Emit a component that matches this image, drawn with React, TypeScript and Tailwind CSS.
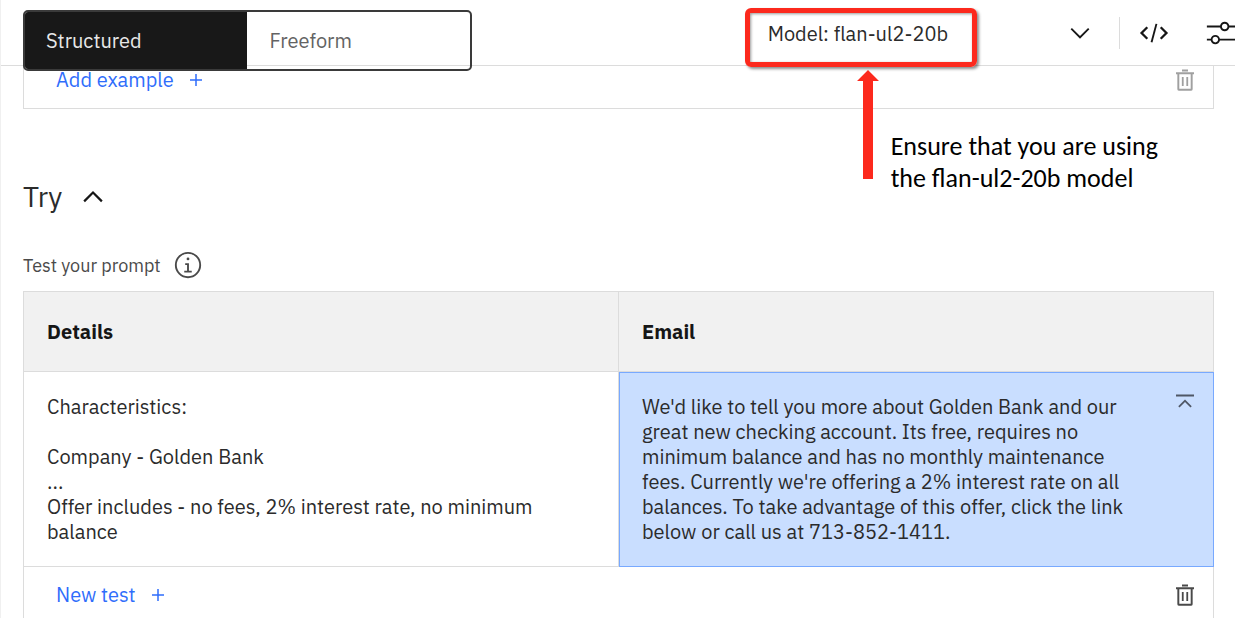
import type { ReactNode } from "react";

type IconProps = { className?: string };

function Icon({ className, children }: { className?: string; children: ReactNode }) {
  return (
    <svg viewBox="0 0 32 32" fill="currentColor" aria-hidden="true" className={className}>
      {children}
    </svg>
  );
}

const ChevronDown = ({ className }: IconProps) => (
  <Icon className={className}>
    <path d="M16 22L6 12 7.4 10.6 16 19.2 24.6 10.6 26 12z" />
  </Icon>
);

const ChevronUp = ({ className }: IconProps) => (
  <Icon className={className}>
    <path d="M16 9.500L26.300 19.800 24.600 21.500 16 12.900 7.400 21.500 5.700 19.800z" />
  </Icon>
);

const Code = ({ className }: IconProps) => (
  <Icon className={className}>
    <path d="M31 16L24 23 22.3 21.3 27.6 16 22.3 10.700 24 9z" />
    <path d="M1 16L8 9 9.700 10.700 4.400 16 9.700 21.300 8 23z" />
    <path d="M5.91 15H26.08V17H5.91z" transform="rotate(-75 16 16)" />
  </Icon>
);

const Adjust = ({ className }: IconProps) => (
  <Icon className={className}>
    <path d="M32 8h-6.1c-.5-2.3-2.5-4-4.9-4s-4.4 1.7-4.9 4H2v2h14.1c.5 2.3 2.5 4 4.9 4s4.4-1.7 4.9-4H32V8zm-11 4c-1.7 0-3-1.3-3-3s1.3-3 3-3 3 1.3 3 3-1.3 3-3 3zM2 24h4.1c.5 2.3 2.5 4 4.9 4s4.4-1.7 4.9-4H32v-2H15.9c-.5-2.3-2.5-4-4.9-4s-4.4 1.7-4.9 4H2v2zm9-4c1.7 0 3 1.3 3 3s-1.3 3-3 3-3-1.3-3-3 1.3-3 3-3z" />
  </Icon>
);

const TrashCan = ({ className }: IconProps) => (
  <Icon className={className}>
    <path d="M11.800 12H14.200V24H11.800zM17.800 12H20.200V24H17.800zM4 5.600V8.200H5.800V28a2 2 0 0 0 2 2.200H24.200a2 2 0 0 0 2-2.200V8.200h1.800V5.600zM8.400 27.600V8.200H23.600V27.600zM12 2H20V4.600H12z" />
  </Icon>
);

const Information = ({ className }: IconProps) => (
  <Icon className={className}>
    <path d="M17 22V14H13V16H15V22H12V24H20V22zM16 8a1.5 1.5 0 1 0 1.5 1.5A1.5 1.5 0 0 0 16 8Z" />
    <path d="M16 30A14 14 0 1 1 30 16 14 14 0 0 1 16 30ZM16 4A12 12 0 1 0 28 16 12 12 0 0 0 16 4Z" />
  </Icon>
);

const Plus = ({ className }: IconProps) => (
  <Icon className={className}>
    <path d="M17 15V8H15V15H8V17H15V24H17V17H24V15z" />
  </Icon>
);

const Collapse = ({ className }: IconProps) => (
  <Icon className={className}>
    <path d="M4 6H28V8.500H4zM16 12.500L7 21.600 8.700 23.300 16 16 23.300 23.300 25 21.600z" />
  </Icon>
);

function ActionBar({ label, muted }: { label: string; muted?: boolean }) {
  return (
    <div className="flex items-center justify-between pr-4 pl-8">
      <button type="button" className="flex items-center gap-2.5 text-[#2f6dfb]">
        {label}
        <Plus className="size-6" />
      </button>
      <button
        type="button"
        aria-label="Delete"
        className={muted ? "text-[#a0a0a0]" : "text-[#4a4a4a]"}
      >
        <TrashCan className="size-6" />
      </button>
    </div>
  );
}

function ModelPicker() {
  return (
    <div className="relative rounded-md border-5 border-[#fc291d] pt-2 pr-6 pb-4 pl-[18px] shadow-[2px_2px_3px_rgba(0,0,0,0.45),inset_1px_1px_3px_rgba(0,0,0,0.4)]">
      <span className="block leading-[25px] whitespace-nowrap">Model: flan-ul2-20b</span>
      <div className="absolute top-[57px] left-[107px] flex items-start gap-3">
        <svg viewBox="0 0 22 110" className="h-[110px] w-[22px] shrink-0" aria-hidden="true">
          <path d="M11 0L22 11H16V109H6V11H0z" fill="#fc291d" />
        </svg>
        <p className="pt-[60px] font-['Carlito','Lato',sans-serif] text-[26px] leading-8 whitespace-nowrap text-black">
          Ensure that you are using
          <br />
          the flan-ul2-20b model
        </p>
      </div>
    </div>
  );
}

export default function App() {
  return (
    <div className="h-screen overflow-hidden border-l border-[#f0f0f0] bg-white font-['IBM_Plex_Sans','Roboto',sans-serif] text-[20px] leading-[25px] text-[#2b2b2b]">
      <header className="relative z-10 flex h-[66px] items-start border-b border-[#dcdcdc] pl-[22px]">
        <div className="mt-2.5 flex h-[61px] w-[449px] shrink-0 overflow-hidden rounded-[5px] border-2 border-[#3a3a3a]">
          <button type="button" aria-pressed="true" className="flex-1 bg-[#181818] pl-[21px] text-left text-[#e8e8e8]">
            Structured
          </button>
          <button type="button" aria-pressed="false" className="flex-1 pl-[23px] text-left text-[#636363]">
            Freeform
          </button>
        </div>
        <div className="ml-auto flex shrink-0 items-start">
          <div className="mt-2 mr-[88px]">
            <ModelPicker />
          </div>
          <button type="button" aria-label="Choose model" className="mt-[18px] text-[#161616]">
            <ChevronDown className="size-[30px]" />
          </button>
          <div className="mt-[17px] ml-6 h-8 w-px bg-[#dcdcdc]" />
          <button type="button" aria-label="View code" className="mt-[18px] ml-[19px] text-[#161616]">
            <Code className="size-[30px]" />
          </button>
          <button type="button" aria-label="Model parameters" className="mt-[18px] ml-9 text-[#161616]">
            <Adjust className="size-[30px]" />
          </button>
        </div>
      </header>

      <main className="pr-[21px] pl-[22px]">
        <div className="border-x border-b border-[#dcdcdc] pt-px pb-4">
          <ActionBar label="Add example" muted />
        </div>

        <h2 className="mt-[73px]">
          <button type="button" aria-expanded="true" className="flex items-center gap-4 text-[28px] leading-[30px]">
            Try
            <ChevronUp className="size-[30px] text-[#161616]" />
          </button>
        </h2>

        <div className="mt-[38px] flex items-center gap-3 text-[18px] text-[#4a4a4a]">
          Test your prompt
          <button type="button" aria-label="About testing your prompt">
            <Information className="size-[30px]" />
          </button>
        </div>

        <table className="mt-[11px] w-full table-fixed border-collapse border border-[#dcdcdc] text-left">
          <thead>
            <tr className="h-20 bg-[#f1f1f1] text-[#161616]">
              <th scope="col" className="border border-[#dcdcdc] px-[23px] font-bold">
                Details
              </th>
              <th scope="col" className="border border-[#dcdcdc] px-[23px] font-bold">
                Email
              </th>
            </tr>
          </thead>
          <tbody>
            <tr className="align-top">
              <td className="border border-[#dcdcdc] px-[23px] py-[22px]">
                Characteristics:
                <br />
                <br />
                Company - Golden Bank
                <br />
                ...
                <br />
                Offer includes - no fees, 2% interest rate, no minimum
                <br />
                balance
              </td>
              <td className="border border-[#78a9ff] bg-[#c9deff] py-[22px] pr-4 pl-[23px] outline-1 -outline-offset-1 outline-[#78a9ff]">
                <div className="flex items-start justify-between">
                  <p className="whitespace-nowrap">
                    We'd like to tell you more about Golden Bank and our
                    <br />
                    great new checking account. Its free, requires no
                    <br />
                    minimum balance and has no monthly maintenance
                    <br />
                    fees. Currently we're offering a 2% interest rate on all
                    <br />
                    balances. To take advantage of this offer, click the link
                    <br />
                    below or call us at 713-852-1411.
                  </p>
                  <button type="button" aria-label="Collapse" className="-mt-1 text-[#4f5766]">
                    <Collapse className="size-6" />
                  </button>
                </div>
              </td>
            </tr>
            <tr>
              <td colSpan={2} className="border border-[#dcdcdc] py-[15px]">
                <ActionBar label="New test" />
              </td>
            </tr>
          </tbody>
        </table>
      </main>
    </div>
  );
}
